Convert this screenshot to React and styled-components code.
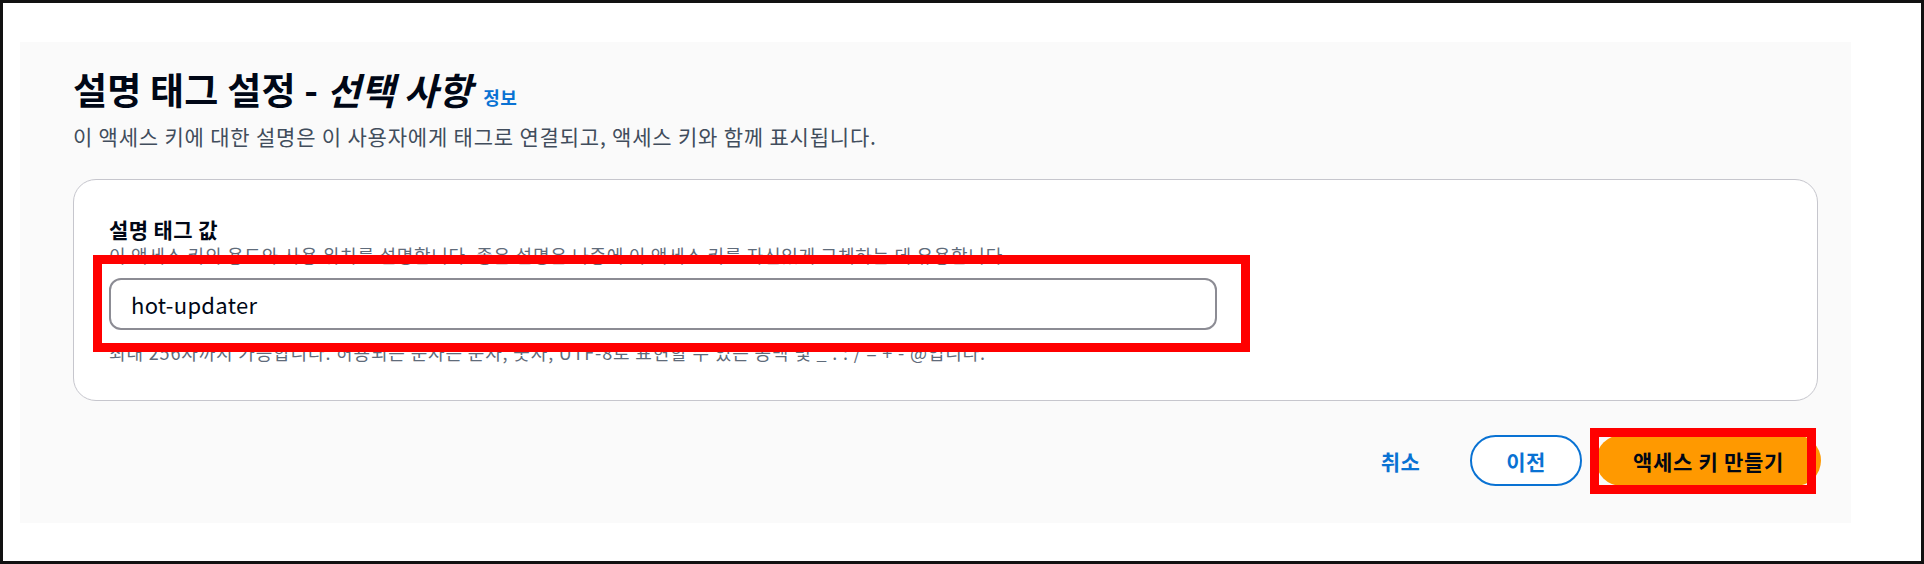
import React from 'react';
import styled, { createGlobalStyle } from 'styled-components';

const GlobalStyle = createGlobalStyle`
    html, body {
        margin: 0;
        padding: 0;
        background: #ffffff;
    }
    * {
        box-sizing: border-box;
    }
`;

const FONT = `"Noto Sans CJK KR", "Noto Sans", "Open Sans", sans-serif`;

const Frame = styled.div`
    width: 1924px;
    height: 564px;
    border: 3px solid #111111;
    background: #ffffff;
    padding: 39px 70px 38px 17px;
    font-family: ${FONT};
    color: #000716;
`;

const Panel = styled.section`
    height: 100%;
    background: #fafafa;
    padding: 24px 33px 0 53px;
    display: flex;
    flex-direction: column;
`;

const Header = styled.header`
    display: flex;
    flex-direction: column;
    gap: 10px;
`;

const TitleRow = styled.div`
    display: flex;
    align-items: baseline;
    gap: 11px;
`;

const Title = styled.h2`
    margin: 0;
    font-size: 37px;
    line-height: 46px;
    font-weight: 700;
    color: #000716;
    letter-spacing: 0.2px;
    em {
        font-style: italic;
    }
`;

const InfoLink = styled.a`
    font-size: 18px;
    font-weight: 700;
    color: #0972d3;
    text-decoration: none;
    letter-spacing: 0.5px;
`;

const Description = styled.p`
    margin: 0;
    font-size: 21px;
    line-height: 28px;
    letter-spacing: 0.8px;
    color: #414d5c;
`;

const Card = styled.div`
    margin-top: 29px;
    background: #ffffff;
    border: 1px solid #c6c6cd;
    border-radius: 23px;
    padding: 35px 35px 36px;
    display: flex;
    flex-direction: column;
`;

const Label = styled.label`
    font-size: 21px;
    line-height: 28px;
    font-weight: 700;
    letter-spacing: 0.4px;
    color: #000716;
`;

const Hint = styled.div`
    font-size: 18px;
    line-height: 24px;
    letter-spacing: 0.72px;
    color: #5f6b7a;
    margin-bottom: 11px;
`;

const Field = styled.div`
    position: relative;
    width: 1108px;
`;

const Input = styled.input`
    width: 100%;
    height: 52px;
    border: 2px solid #8c8c94;
    border-radius: 12px;
    padding: 0 20px;
    font-family: ${FONT};
    font-size: 22px;
    letter-spacing: 0.3px;
    color: #000716;
    background: #ffffff;
    outline: none;
`;

const Constraint = styled.div`
    margin-top: 10px;
    font-size: 18px;
    line-height: 24px;
    letter-spacing: 0.85px;
    color: #5f6b7a;
`;

const Highlight = styled.div`
    position: absolute;
    top: ${p => p.$top}px;
    left: ${p => p.$left}px;
    right: ${p => p.$right}px;
    bottom: ${p => p.$bottom}px;
    border: 9px solid #ff0000;
    pointer-events: none;
`;

const Actions = styled.div`
    margin-top: 34px;
    margin-right: -3px;
    display: flex;
    justify-content: flex-end;
    align-items: center;
    gap: 14px;
`;

const Button = styled.button`
    position: relative;
    height: 51px;
    padding: 0 ${p => (p.$variant === 'primary' ? 35 : 34)}px;
    border-radius: 26px;
    font-family: ${FONT};
    font-size: 21px;
    font-weight: 700;
    letter-spacing: ${p => (p.$variant === 'primary' ? 0.7 : 0.5)}px;
    cursor: pointer;
    border: 2px solid ${p => (p.$variant === 'normal' ? '#0972d3' : 'transparent')};
    background: ${p => (p.$variant === 'primary' ? '#ff9900' : p.$variant === 'normal' ? '#ffffff' : 'transparent')};
    color: ${p => (p.$variant === 'primary' ? '#000716' : '#0972d3')};
`;

export default function App() {
    return (
        <>
            <GlobalStyle />
            <Frame>
                <Panel>
                    <Header>
                        <TitleRow>
                            <Title>설명 태그 설정 - <em>선택 사항</em></Title>
                            <InfoLink href="#">정보</InfoLink>
                        </TitleRow>
                        <Description>
                            이 액세스 키에 대한 설명은 이 사용자에게 태그로 연결되고, 액세스 키와 함께 표시됩니다.
                        </Description>
                    </Header>
                    <Card>
                        <Label>설명 태그 값</Label>
                        <Hint>
                            이 액세스 키의 용도와 사용 위치를 설명합니다. 좋은 설명은 나중에 이 액세스 키를 자신있게 교체하는 데 유용합니다.
                        </Hint>
                        <Field>
                            <Input defaultValue="hot-updater" />
                            <Highlight $top={-23} $left={-16} $right={-33} $bottom={-22} />
                        </Field>
                        <Constraint>
                            최대 256자까지 가능합니다. 허용되는 문자는 문자, 숫자, UTF-8로 표현할 수 있는 공백 및 _ . : / = + - @입니다.
                        </Constraint>
                    </Card>
                    <Actions>
                        <Button $variant="link">취소</Button>
                        <Button $variant="normal">이전</Button>
                        <Button $variant="primary">
                            액세스 키 만들기
                            <Highlight $top={-9} $left={-8} $right={3} $bottom={-10} />
                        </Button>
                    </Actions>
                </Panel>
            </Frame>
        </>
    );
}
